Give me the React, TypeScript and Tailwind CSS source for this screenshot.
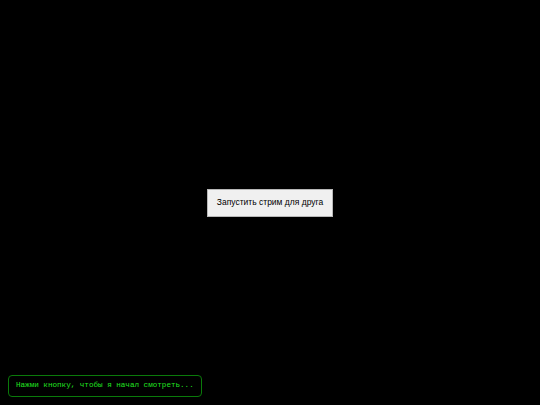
export default function App() {
  return (
    <div className="relative w-[540px] h-[405px] bg-black overflow-hidden">
      <div className="flex h-full items-center justify-center">
        <button className="h-[28px] px-[9px] bg-[#f0f0f0] border border-[#b8b8b8] text-[8.5px] text-black font-['Liberation_Sans',Arial,sans-serif]">
          Запустить стрим для друга
        </button>
      </div>
      <div className="absolute left-[8px] bottom-[8px] h-[22px] flex items-center px-[7px] rounded-[4px] border border-[#0a7a0a] bg-black text-[#20e020] text-[7.6px] font-['Liberation_Mono','DejaVu_Sans_Mono',monospace]">
        Нажми кнопку, чтобы я начал смотреть...
      </div>
    </div>
  );
}
